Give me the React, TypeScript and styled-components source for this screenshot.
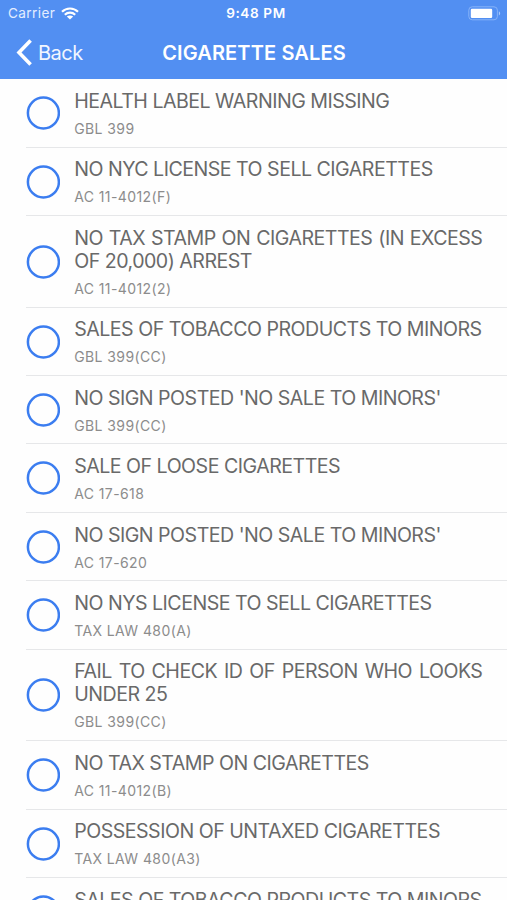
import React from "react";
import styled, { createGlobalStyle } from "styled-components";

const GlobalStyle = createGlobalStyle`
  * { box-sizing: border-box; }
  body { margin: 0; background: #fff; }
`;

const Screen = styled.div`
  width: 507px;
  height: 900px;
  overflow: hidden;
  display: flex;
  flex-direction: column;
  background: #fefefe;
  font-family: Inter, "Liberation Sans", sans-serif;
`;

const Header = styled.header`
  flex: none;
  height: 79.3px;
  background: #528ff2;
  color: #fff;
`;

const StatusBar = styled.div`
  display: grid;
  grid-template-columns: 1fr auto 1fr;
  align-items: center;
  height: 27px;
  padding: 0 6px 0 8px;
  font-size: 13.6px;
  line-height: 27px;
`;

const Carrier = styled.span`
  display: flex;
  align-items: center;
  gap: 6px;
  color: #e3edff;
  letter-spacing: 0.4px;
`;

const Clock = styled.span`
  font-weight: 600;
  font-size: 13.6px;
  letter-spacing: 0.6px;
  padding-left: 3px;
`;

const BatterySlot = styled.span`
  display: flex;
  justify-content: flex-end;
`;

const NavBar = styled.nav`
  display: grid;
  grid-template-columns: 1fr auto 1fr;
  align-items: center;
  height: 51px;
  padding: 0 16px;
`;

const BackButton = styled.button`
  display: flex;
  align-items: center;
  gap: 6px;
  padding: 0;
  border: 0;
  background: none;
  color: #f1f6ff;
  font: 400 20px/24px Inter, sans-serif;
  letter-spacing: -0.5px;
`;

const Title = styled.h1`
  margin: 0;
  padding-left: 1px;
  font-size: 20px;
  font-weight: 600;
  line-height: 24px;
  letter-spacing: 0.12px;
`;

const List = styled.ul`
  flex: none;
  margin: 0;
  padding: 0 0 0 26px;
  list-style: none;
`;

const Row = styled.li`
  display: flex;
  align-items: center;
  gap: 14.2px;
  padding: 10.7px 24.6px 7.75px 0;
  border-bottom: 1px solid #e6e7e9;
`;

const Radio = styled.svg`
  flex: none;
  width: 34px;
  height: 34px;
  margin-bottom: 2.4px;
  fill: none;
  stroke: #3b7df0;
  stroke-width: 2.5px;
`;

const Texts = styled.div`
  flex: 1;
  min-width: 0;
`;

const Name = styled.div`
  color: #696969;
  font-size: 19.6px;
  line-height: 23px;
  letter-spacing: -0.51px;
  text-align: justify;
`;

const Code = styled.div`
  margin-top: 6px;
  color: #8c8c8c;
  font-size: 14px;
  line-height: 20px;
  letter-spacing: 0.4px;
`;

const violations = [
  ["HEALTH LABEL WARNING MISSING", "GBL 399"],
  ["NO NYC LICENSE TO SELL CIGARETTES", "AC 11-4012(F)"],
  ["NO TAX STAMP ON CIGARETTES (IN EXCESS OF 20,000) ARREST", "AC 11-4012(2)"],
  ["SALES OF TOBACCO PRODUCTS TO MINORS", "GBL 399(CC)"],
  ["NO SIGN POSTED 'NO SALE TO MINORS'", "GBL 399(CC)"],
  ["SALE OF LOOSE CIGARETTES", "AC 17-618"],
  ["NO SIGN POSTED 'NO SALE TO MINORS'", "AC 17-620"],
  ["NO NYS LICENSE TO SELL CIGARETTES", "TAX LAW 480(A)"],
  ["FAIL TO CHECK ID OF PERSON WHO LOOKS UNDER 25", "GBL 399(CC)"],
  ["NO TAX STAMP ON CIGARETTES", "AC 11-4012(B)"],
  ["POSSESSION OF UNTAXED CIGARETTES", "TAX LAW 480(A3)"],
  ["SALES OF TOBACCO PRODUCTS TO MINORS", ""],
];

const WifiIcon = () => (
  <svg width="18" height="13" viewBox="0 0 18 13" fill="none" stroke="#fff" strokeWidth="2.2">
    <path d="M1 4.8C5.5 0.4 12.5 0.4 17 4.8" />
    <path d="M3.8 7.8C6.8 5 11.2 5 14.2 7.8" />
    <path d="M9 12.6L5.8 9.5C7.6 8 10.4 8 12.2 9.5Z" fill="#fff" stroke="none" />
  </svg>
);

const BatteryIcon = () => (
  <svg width="33" height="15" viewBox="0 0 33 15" fill="none">
    <rect x="0.8" y="0.8" width="28.6" height="13" rx="3.4" stroke="#86b2f8" strokeWidth="1" />
    <rect x="2.8" y="2.7" width="21.4" height="9.2" rx="1.2" fill="#fff" />
    <path d="M30.9 5.2C32.6 6 32.6 8.6 30.9 9.4Z" fill="#a9c9fc" />
  </svg>
);

const ChevronIcon = () => (
  <svg width="16" height="27" viewBox="0 0 16 27" fill="none" stroke="#fff" strokeWidth="3.6">
    <path d="M14.6 1.5L3 13.5L14.6 25.5" />
  </svg>
);

export default function App() {
  return (
    <Screen>
      <GlobalStyle />
      <Header>
        <StatusBar>
          <Carrier>Carrier <WifiIcon /></Carrier>
          <Clock>9:48 PM</Clock>
          <BatterySlot><BatteryIcon /></BatterySlot>
        </StatusBar>
        <NavBar>
          <BackButton><ChevronIcon />Back</BackButton>
          <Title>CIGARETTE SALES</Title>
        </NavBar>
      </Header>
      <List>
        {violations.map(([name, code], i) => (
          <Row key={i}>
            <Radio viewBox="0 0 34 34"><circle cx="17.4" cy="17" r="15.5" /></Radio>
            <Texts>
              <Name>{name}</Name>
              <Code>{code || "\u00a0"}</Code>
            </Texts>
          </Row>
        ))}
      </List>
    </Screen>
  );
}
